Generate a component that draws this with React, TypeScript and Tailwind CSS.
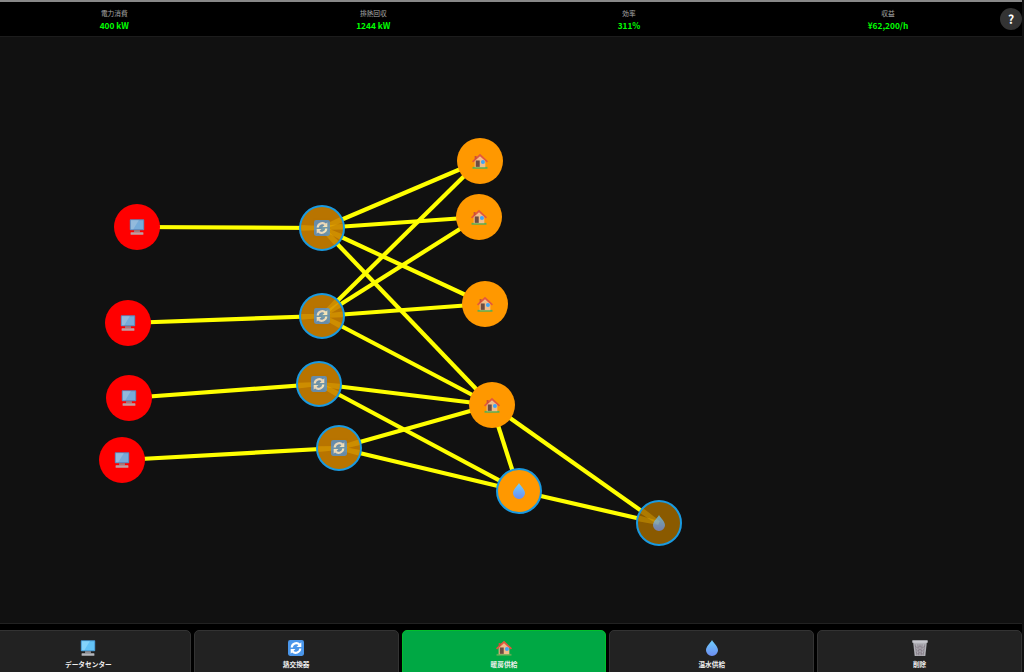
const FONT = "font-['Noto_Sans_CJK_JP','Noto_Sans',sans-serif]";
const TOP = 37;

type Kind = 'dc' | 'hx' | 'home' | 'water';
type GraphNode = { id: string; x: number; y: number; kind: Kind; fill: string; ring?: boolean; dim?: number };

const nodes: GraphNode[] = [
  { id: 'd1', x: 137, y: 227, kind: 'dc', fill: 'bg-[#ff0000]' },
  { id: 'd2', x: 127.5, y: 323, kind: 'dc', fill: 'bg-[#ff0000]' },
  { id: 'd3', x: 129, y: 398, kind: 'dc', fill: 'bg-[#ff0000]' },
  { id: 'd4', x: 122, y: 460, kind: 'dc', fill: 'bg-[#ff0000]' },
  { id: 'x1', x: 322, y: 228, kind: 'hx', fill: 'bg-[#b87400]', ring: true, dim: 0.72 },
  { id: 'x2', x: 322, y: 316, kind: 'hx', fill: 'bg-[#b87400]', ring: true, dim: 0.72 },
  { id: 'x3', x: 319, y: 384, kind: 'hx', fill: 'bg-[#b87400]', ring: true, dim: 0.72 },
  { id: 'x4', x: 338.5, y: 448, kind: 'hx', fill: 'bg-[#b87400]', ring: true, dim: 0.72 },
  { id: 'h1', x: 479.5, y: 161, kind: 'home', fill: 'bg-[#ff9800]' },
  { id: 'h2', x: 479, y: 217, kind: 'home', fill: 'bg-[#ff9800]' },
  { id: 'h3', x: 485, y: 304, kind: 'home', fill: 'bg-[#ff9800]' },
  { id: 'h4', x: 491.5, y: 405, kind: 'home', fill: 'bg-[#ff9800]' },
  { id: 'w1', x: 519, y: 491, kind: 'water', fill: 'bg-[#ff9800]', ring: true },
  { id: 'w2', x: 658.5, y: 523, kind: 'water', fill: 'bg-[#8a5a00]', ring: true, dim: 0.7 },
];

const edges: [string, string][] = [
  ['d1', 'x1'], ['d2', 'x2'], ['d3', 'x3'], ['d4', 'x4'],
  ['x1', 'h1'], ['x1', 'h2'], ['x1', 'h3'], ['x1', 'h4'],
  ['x2', 'h1'], ['x2', 'h2'], ['x2', 'h3'], ['x2', 'h4'],
  ['x3', 'h4'], ['x3', 'w1'], ['x4', 'h4'], ['x4', 'w1'],
  ['h4', 'w1'], ['h4', 'w2'], ['w1', 'w2'],
];

const stats = [
  { label: '電力消費', value: '400 kW' },
  { label: '排熱回収', value: '1244 kW' },
  { label: '効率', value: '311%' },
  { label: '収益', value: '¥62,200/h' },
];

function byId(id: string) {
  return nodes.find((n) => n.id === id)!;
}

function DesktopIcon({ size }: { size: number }) {
  return (
    <svg width={size} height={size} viewBox="2 1 28 30">
      <rect x="2.500" y="1.500" width="27" height="20.500" rx="1.500" fill="#4a9bd4" />
      <rect x="4.500" y="3.500" width="23" height="16.500" fill="#63c3f7" />
      <path d="M4.500 3.500h15L9 20H4.500z" fill="#84d4fb" />
      <rect x="10.500" y="22" width="11" height="4" fill="#8d8f96" />
      <rect x="4" y="26" width="24" height="4.500" rx="1" fill="#b4b6bc" />
    </svg>
  );
}

function ExchangeIcon({ size }: { size: number }) {
  return (
    <svg width={size} height={size} viewBox="1 1 30 30">
      <rect x="1" y="1" width="30" height="30" rx="4" fill="#4a96ea" />
      <path d="M8 15a8.500 8.500 0 0 1 14.500-5.500" fill="none" stroke="#fff" strokeWidth="4" />
      <path d="M26 5v9h-9z" fill="#fff" />
      <path d="M24 17a8.500 8.500 0 0 1-14.500 5.500" fill="none" stroke="#fff" strokeWidth="4" />
      <path d="M6 27v-9h9z" fill="#fff" />
    </svg>
  );
}

function HomeIcon({ size }: { size: number }) {
  return (
    <svg width={size} height={size} viewBox="1 2 30 29">
      <rect x="2" y="27.500" width="28" height="3.500" fill="#5cae52" />
      <path d="M6 14 16 5l10 9v14H6z" fill="#f2bd8a" />
      <path d="M1 17 16 3l15 14-2 2.500L16 7.500 3 19.500z" fill="#e2583e" />
      <path d="M6 7h3.500v4.500L6 15z" fill="#c9503a" />
      <rect x="8" y="15.500" width="7.500" height="12" fill="#6d4c41" />
      <circle cx="21.500" cy="18.500" r="3.800" fill="#42a5f5" />
    </svg>
  );
}

function DropIcon({ size }: { size: number }) {
  return (
    <svg width={size} height={size} viewBox="0 0 32 32">
      <defs>
        <linearGradient id="drop" x1="0" y1="0" x2="0" y2="1">
          <stop offset="0" stopColor="#6fd0ff" />
          <stop offset="1" stopColor="#6d8df0" />
        </linearGradient>
      </defs>
      <path d="M16 0c3 6 12 12.500 12 20.500a12 11.500 0 0 1-24 0C4 12.500 13 6 16 0z" fill="url(#drop)" />
    </svg>
  );
}

function TrashIcon({ size }: { size: number }) {
  return (
    <svg width={size} height={size} viewBox="1 1 30 30">
      <path d="M3 4h26l-3 27H6z" fill="#b0b0b6" />
      <path d="M7 9l3 21M12 9l1.500 21M16 9v21M20 9l-1.500 21M25 9l-3 21M7 12l4 4 5-4 5 4 4-4M8 18l4 4 4-4 4 4 4-4M9 24l3 4 4-4 4 4 3-4" stroke="#7b6f7c" strokeWidth="1.100" fill="none" />
      <rect x="1.500" y="1.500" width="29" height="4.500" rx="1" fill="#c8c8ce" />
    </svg>
  );
}

function NodeIcon({ kind, size }: { kind: Kind; size: number }) {
  if (kind === 'dc') return <DesktopIcon size={size} />;
  if (kind === 'hx') return <ExchangeIcon size={size} />;
  if (kind === 'home') return <HomeIcon size={size} />;
  return <DropIcon size={size} />;
}

// faint wedge of each connected line, seen through the dimmed nodes
function Fan({ node }: { node: GraphNode }) {
  const wedges = edges
    .filter(([a, b]) => a === node.id || b === node.id)
    .map(([a, b]) => {
      const other = byId(a === node.id ? b : a);
      const dx = other.x - node.x;
      const dy = other.y - node.y;
      const len = Math.hypot(dx, dy);
      const ux = dx / len;
      const uy = dy / len;
      const ex = 23 + ux * 24;
      const ey = 23 + uy * 24;
      return `${23 - uy * 2},${23 + ux * 2} ${23 + uy * 2},${23 - ux * 2} ${ex + uy * 3},${ey - ux * 3} ${ex - uy * 3},${ey + ux * 3}`;
    });
  return (
    <svg className="absolute left-[-2px] top-[-2px]" width="46" height="46">
      {wedges.map((p) => (
        <polygon key={p} points={p} fill="#ffc800" fillOpacity={0.3} />
      ))}
    </svg>
  );
}

function Node({ node }: { node: GraphNode }) {
  return (
    <div
      className={`absolute flex h-[46px] w-[46px] items-center justify-center overflow-hidden rounded-full ${node.fill} ${node.ring ? 'border-2 border-[#1a9ae0]' : ''}`}
      style={{ left: node.x - 23, top: node.y - 23 - TOP }}
    >
      {node.dim ? <Fan node={node} /> : null}
      <div className="relative flex" style={{ opacity: node.dim ?? (node.kind === 'dc' ? 0.88 : 1) }}>
        <NodeIcon kind={node.kind} size={16} />
      </div>
    </div>
  );
}

function NavButton({ label, active, children }: { label: string; active?: boolean; children: React.ReactNode }) {
  return (
    <div
      className={`flex h-[50px] min-w-0 flex-1 flex-col items-center gap-[3px] rounded-[5px] border pt-[9px] ${
        active ? 'border-[#00c02c] bg-[#00a844]' : 'border-[#333] bg-[#222]'
      }`}
    >
      {children}
      <span className="text-[6.7px] font-bold leading-[11px] text-[#eee]">{label}</span>
    </div>
  );
}

export default function App() {
  return (
    <div className={`relative flex h-[672px] w-[1024px] flex-col overflow-hidden bg-[#111] ${FONT}`}>
      {/* stats */}
      <header className="-ml-[14px] flex h-[37px] w-[1036px] shrink-0 items-center justify-around border-t-2 border-t-[#888] border-b border-b-[#1c1c1c] bg-black">
        {stats.map((s) => (
          <div key={s.label} className="flex flex-col items-center">
            <span className="text-[6.7px] leading-[12px] text-[#aaa]">{s.label}</span>
            <span className="text-[8.3px] font-bold leading-[13px] text-[#00ff00]">{s.value}</span>
          </div>
        ))}
      </header>
      <div className="absolute right-[2px] top-[8px] z-10 flex h-[22px] w-[22px] items-center justify-center rounded-full bg-[#333] text-[12px] font-bold text-white">
        ?
      </div>

      {/* canvas */}
      <main className="relative min-h-0 flex-1">
        <svg className="absolute left-0 top-0" width="1024" height="586">
          {edges.map(([a, b]) => {
            const from = byId(a);
            const to = byId(b);
            return (
              <line key={a + b} x1={from.x} y1={from.y - TOP} x2={to.x} y2={to.y - TOP} stroke="#ffff00" strokeWidth="4.2" />
            );
          })}
        </svg>
        {nodes.map((n) => (
          <Node key={n.id} node={n} />
        ))}
      </main>

      {/* toolbar */}
      <footer className="-ml-[14px] flex h-[49px] w-[1036px] shrink-0 gap-[3px] overflow-hidden border-t border-t-[#222] bg-black pt-[6px]">
        <NavButton label="データセンター">
          <DesktopIcon size={16} />
        </NavButton>
        <NavButton label="熱交換器">
          <ExchangeIcon size={16} />
        </NavButton>
        <NavButton label="暖房供給" active>
          <HomeIcon size={16} />
        </NavButton>
        <NavButton label="温水供給">
          <DropIcon size={16} />
        </NavButton>
        <NavButton label="削除">
          <TrashIcon size={16} />
        </NavButton>
      </footer>
    </div>
  );
}
